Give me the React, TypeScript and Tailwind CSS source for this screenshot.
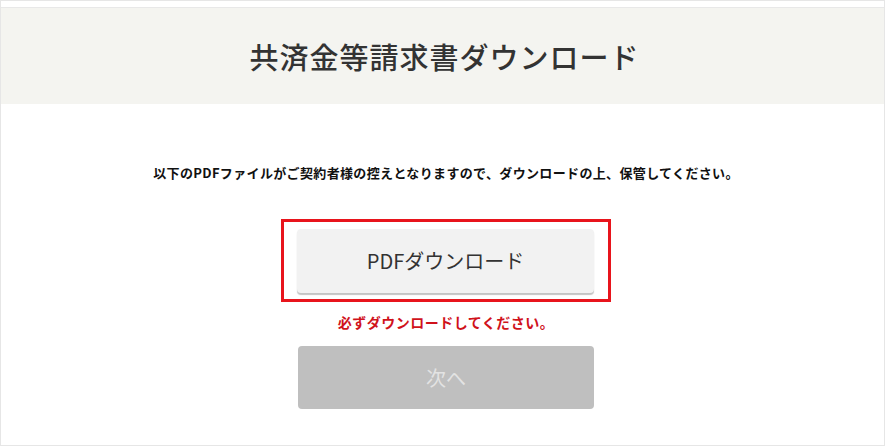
export default function App() {
  const font = { fontFamily: '"Noto Sans CJK JP", "Noto Sans", sans-serif' };
  return (
    <div
      className="w-[885px] h-[446px] bg-white border border-[#e6e6e6] flex flex-col box-border overflow-hidden"
      style={font}
    >
      <div className="h-[6px] shrink-0" />
      <header className="h-[97px] shrink-0 bg-[#f4f4f0] border-t border-[#e8e8e8] flex items-center justify-center pl-[4px]">
        <h1 className="text-[29px] font-medium text-[#333333] tracking-[1px] leading-none">
          共済金等請求書ダウンロード
        </h1>
      </header>
      <main className="flex flex-col items-center pl-[7px]">
        <p className="mt-[60px] text-[13px] leading-[18px] font-bold text-[#111111] tracking-[0.35px]">
          以下のPDFファイルがご契約者様の控えとなりますので、ダウンロードの上、保管してください。
        </p>
        <div className="mt-[37px] w-[330px] h-[83px] border-[3px] border-[#e8141c] pl-[13px] pt-[7px] box-border">
          <button className="w-[297px] h-[64px] rounded-[4px] bg-[#f2f2f2] shadow-[0_2px_1px_#c4c4c4] text-[20px] text-[#333333] flex items-center justify-center">
            PDFダウンロード
          </button>
        </div>
        <p className="mt-[10px] text-[14px] leading-[20px] font-bold text-[#d0121b] tracking-[0.5px]">
          必ずダウンロードしてください。
        </p>
        <button className="mt-[14px] w-[296px] h-[63px] rounded-[4px] bg-[#bfbfbf] text-[20px] text-[#e3e3e3] flex items-center justify-center">
          次へ
        </button>
      </main>
    </div>
  );
}
